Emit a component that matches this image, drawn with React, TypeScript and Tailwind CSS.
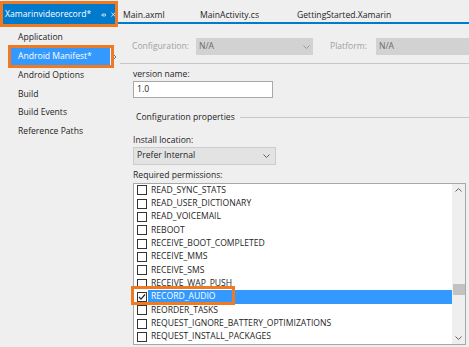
import React from "react";

const perms = [
  "READ_SYNC_STATS",
  "READ_USER_DICTIONARY",
  "READ_VOICEMAIL",
  "REBOOT",
  "RECEIVE_BOOT_COMPLETED",
  "RECEIVE_MMS",
  "RECEIVE_SMS",
  "RECEIVE_WAP_PUSH",
  "RECORD_AUDIO",
  "REORDER_TASKS",
  "REQUEST_IGNORE_BATTERY_OPTIMIZATIONS",
  "REQUEST_INSTALL_PACKAGES",
];

const Chevron = ({ up = false, color = "#606060" }: { up?: boolean; color?: string }) => (
  <svg width="7" height="4" viewBox="0 0 7 4">
    <path d={up ? "M0.5 3.5 L3.5 0.5 L6.5 3.5" : "M0.5 0.5 L3.5 3.5 L6.5 0.5"} fill="none" stroke={color} strokeWidth="1" />
  </svg>
);

export default function App() {
  return (
    <div
      className="relative w-[469px] h-[347px] overflow-hidden bg-[#efefef] text-[#1e1e1e] text-[8.6px] leading-[9px]"
      style={{ fontFamily: '"Open Sans", "Noto Sans", sans-serif' }}
    >
      {/* Tab bar */}
      <div className="flex h-[24px] border-b-2 border-[#007acc]">
        <div className="mt-[4px] w-[116px] h-[18px] bg-[#007acc] text-white flex items-center pl-[5px] pt-[3px]">
          <span>Xamarinvideorecord*</span>
          <svg width="8" height="6" viewBox="0 0 8 6" className="ml-[10px]">
            <path d="M0 3 H3 M3 1 V5 M3 1.5 H7 V4.5 H3" fill="none" stroke="#fff" strokeWidth="1" />
          </svg>
          <svg width="7" height="7" viewBox="0 0 7 7" className="ml-[5px]">
            <path d="M0.5 0.5 L6.5 6.5 M6.5 0.5 L0.5 6.5" stroke="#fff" strokeWidth="1.2" />
          </svg>
        </div>
        <div className="w-[84px] pl-[7px] flex items-center pt-[8px]">Main.axml</div>
        <div className="w-[97px] flex items-center pt-[8px]">MainActivity.cs</div>
        <div className="flex items-center pt-[8px]">GettingStarted.Xamarin</div>
      </div>

      <div className="flex">
        {/* Sidebar */}
        <div className="w-[117px] pt-[4px] flex flex-col">
          <div className="h-[19px] flex items-center pl-[18px]">Application</div>
          <div className="relative h-[19px] flex items-center">
            <div className="ml-[11px] w-[100px] h-[17px] bg-[#3399ff] text-white flex items-center pl-[7px]">
              Android Manifest*
            </div>
            <svg width="4" height="6" viewBox="0 0 4 6" className="ml-[3px]">
              <path d="M0.5 0.5 L3 3 L0.5 5.5" fill="none" stroke="#707070" strokeWidth="1" />
            </svg>
          </div>
          <div className="h-[19px] flex items-center pl-[18px]">Android Options</div>
          <div className="h-[18.5px] flex items-center pl-[18px]">Build</div>
          <div className="h-[18.5px] flex items-center pl-[18px]">Build Events</div>
          <div className="h-[18.5px] flex items-center pl-[18px]">Reference Paths</div>
        </div>

        {/* Content */}
        <div className="flex-1 flex flex-col">
          <div className="mt-[14px] h-[17px] flex items-center">
            <span className="ml-[15px] w-[64px] text-[#a0a0a0]">Configuration:</span>
            <div className="w-[117px] h-full bg-[#d2d2d2] flex items-center pl-[3px] pr-[3px] text-[#6a6a6a]">
              <span className="flex-1">N/A</span>
              <Chevron color="#9a9a9a" />
            </div>
            <span className="ml-[17px] w-[46px] text-[#a0a0a0]">Platform:</span>
            <div className="flex-1 h-full bg-[#d2d2d2] flex items-center pl-[3px] text-[#6a6a6a]">N/A</div>
          </div>
          <div className="mt-[8px] ml-[3px] border-t border-[#c8c8c8]" />

          <div className="ml-[16px] mt-[6px]">version name:</div>
          <div className="ml-[16px] mt-[2px] w-[140px] h-[17px] bg-white border border-[#a8a8a8] flex items-center pl-[3px]">
            1.0
          </div>

          <div className="mt-[15px] h-[9px] flex items-center">
            <span className="ml-[19px]">Configuration properties</span>
            <div className="flex-1 ml-[5px] border-t border-[#c8c8c8]" />
          </div>

          <div className="ml-[16px] mt-[14px]">Install location:</div>
          <div className="ml-[16px] mt-[1.5px] w-[143px] h-[18px] bg-[#e3e3e3] border border-[#cccccc] flex items-center pl-[3px] pr-[5px]">
            <span className="flex-1">Prefer Internal</span>
            <Chevron />
          </div>

          <div className="ml-[16px] mt-[6.5px]">Required permissions:</div>
          <div className="ml-[16px] mt-[2.5px] w-[333px] h-[162px] bg-white border border-[#a8a8a8] flex">
            <div className="flex-1 flex flex-col">
              {perms.map((p) => {
                const sel = p === "RECORD_AUDIO";
                return (
                  <div key={p} className="h-[13.35px] flex items-center shrink-0">
                    <div className="ml-[3px] w-[10px] h-[10px] border border-[#333] bg-white flex items-center justify-center">
                      {sel && (
                        <svg width="8" height="8" viewBox="0 0 8 8">
                          <path d="M1 4 L3 6.2 L7 1.5" fill="none" stroke="#222" strokeWidth="1.2" />
                        </svg>
                      )}
                    </div>
                    <div
                      className={
                        sel
                          ? "ml-[1px] flex-1 h-full bg-[#3399ff] text-white flex items-center pl-[3px]"
                          : "ml-[1px] flex-1 h-full flex items-center pl-[3px]"
                      }
                    >
                      {p}
                    </div>
                  </div>
                );
              })}
            </div>
            <div className="w-[13px] bg-[#efefef] flex flex-col items-center">
              <div className="h-[12px] flex items-center"><Chevron up /></div>
              <div className="flex-1" />
              <div className="w-[12px] h-[11px] bg-[#c2c2c2] mb-[37px]" />
              <div className="h-[12px] flex items-center"><Chevron /></div>
            </div>
          </div>
        </div>
      </div>

      {/* Orange annotation boxes */}
      <div className="absolute left-0 top-[1px] w-[118px] h-[26px] border-[3px] border-[#f07a22] pointer-events-none" />
      <div className="absolute left-[8px] top-[45px] w-[106px] h-[23px] border-[3px] border-[#f07a22] pointer-events-none" />
      <div className="absolute left-[131px] top-[286px] w-[104px] h-[19px] border-[3px] border-[#f07a22] pointer-events-none" />
    </div>
  );
}
